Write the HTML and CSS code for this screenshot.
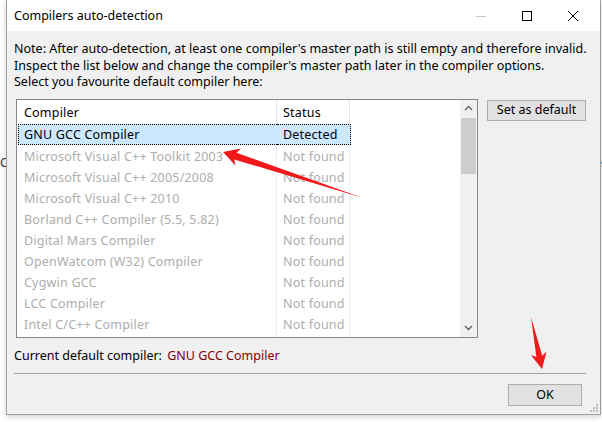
FILE: index.html
```html
<!DOCTYPE html>
<html>
<head>
<meta charset="utf-8">
<link rel="stylesheet" href="styles.css">
</head>
<body>
<div class="frag frag-left">ɛC</div>
<div class="frag frag-right">er</div>
<div class="window">
  <div class="titlebar">
    <span class="title">Compilers auto-detection</span>
    <div class="caption">
      <svg class="cap cap-min" width="12" height="12" viewBox="0 0 12 12"><path d="M1 6.5h10" stroke="#c8c8c8" stroke-width="1"/></svg>
      <svg class="cap cap-max" width="12" height="12" viewBox="0 0 12 12"><rect x="1.5" y="1.5" width="9" height="9" fill="none" stroke="#000" stroke-width="1"/></svg>
      <svg class="cap cap-close" width="12" height="12" viewBox="0 0 12 12"><path d="M1 1l10 10M11 1L1 11" stroke="#000" stroke-width="1"/></svg>
    </div>
  </div>
  <div class="client">
    <p class="note">Note: After auto-detection, at least one compiler's master path is still empty and therefore invalid.<br>Inspect the list below and change the compiler's master path later in the compiler options.<br>Select you favourite default compiler here:</p>
    <div class="mid">
      <div class="listbox">
        <div class="lv">
          <div class="lv-head">
            <div class="c1">Compiler</div>
            <div class="c2">Status</div>
          </div>
          <div class="row sel"><div class="c1">GNU GCC Compiler</div><div class="c2">Detected</div></div>
          <div class="row dim"><div class="c1">Microsoft Visual C++ Toolkit 2003</div><div class="c2">Not found</div></div>
          <div class="row dim"><div class="c1">Microsoft Visual C++ 2005/2008</div><div class="c2">Not found</div></div>
          <div class="row dim"><div class="c1">Microsoft Visual C++ 2010</div><div class="c2">Not found</div></div>
          <div class="row dim"><div class="c1">Borland C++ Compiler (5.5, 5.82)</div><div class="c2">Not found</div></div>
          <div class="row dim"><div class="c1">Digital Mars Compiler</div><div class="c2">Not found</div></div>
          <div class="row dim"><div class="c1">OpenWatcom (W32) Compiler</div><div class="c2">Not found</div></div>
          <div class="row dim"><div class="c1">Cygwin GCC</div><div class="c2">Not found</div></div>
          <div class="row dim"><div class="c1">LCC Compiler</div><div class="c2">Not found</div></div>
          <div class="row dim"><div class="c1">Intel C/C++ Compiler</div><div class="c2">Not found</div></div>
          <div class="row filler"><div class="c1"></div><div class="c2"></div></div>
        </div>
        <div class="vscroll">
          <div class="sb-btn"><svg width="9" height="6" viewBox="0 0 9 6"><path d="M1 5l3.5-3.5L8 5" fill="none" stroke="#606060" stroke-width="1.4"/></svg></div>
          <div class="sb-track"><div class="sb-thumb"></div></div>
          <div class="sb-btn"><svg width="9" height="6" viewBox="0 0 9 6"><path d="M1 1l3.5 3.5L8 1" fill="none" stroke="#606060" stroke-width="1.4"/></svg></div>
        </div>
      </div>
      <div class="side">
        <button class="btn btn-default">Set as default</button>
      </div>
    </div>
    <div class="current">Current default compiler: <span class="value">GNU GCC Compiler</span></div>
    <div class="sep"></div>
    <div class="footer">
      <button class="btn btn-ok">OK</button>
    </div>
    <svg class="grip" width="8" height="8" viewBox="0 0 8 8">
      <rect x="6" y="0" width="2" height="2" fill="#bcbcbc"/>
      <rect x="3" y="3" width="2" height="2" fill="#bcbcbc"/>
      <rect x="6" y="3" width="2" height="2" fill="#bcbcbc"/>
      <rect x="0" y="6" width="2" height="2" fill="#bcbcbc"/>
      <rect x="3" y="6" width="2" height="2" fill="#bcbcbc"/>
      <rect x="6" y="6" width="2" height="2" fill="#bcbcbc"/>
    </svg>
  </div>
</div>
<svg class="annot" width="602" height="422" viewBox="0 0 602 422">
  <polygon points="223,152 241,148.4 236.5,152.8 363,198 234.3,159.4 235.4,165.6" fill="#f01818"/>
  <polygon points="542,369 530.9,355.1 536.4,356.9 531,317 542.2,355.7 546.5,351.7" fill="#f01818"/>
</svg>
</body>
</html>
```

FILE: styles.css
```css
* { box-sizing: border-box; }
html, body { margin: 0; padding: 0; }
body {
  width: 602px;
  height: 422px;
  overflow: hidden;
  background: #ffffff;
  position: relative;
  font-family: "Noto Sans", "Liberation Sans", sans-serif;
  font-size: 12.5px;
  color: #000;
}
.frag {
  position: absolute;
  top: 155px;
  font-size: 12.5px;
  color: #333;
  line-height: 16px;
}
.frag-left { left: -6px; }
.frag-right { left: 595px; }

.window {
  position: relative;
  margin: -1px 0 0 6px;
  width: 595px;
  height: 416px;
  border: 1px solid #9d9d9d;
  background: #f0f0f0;
  box-shadow: 0 2px 6px rgba(0,0,0,0.18);
  display: flex;
  flex-direction: column;
}
.titlebar {
  height: 31px;
  background: #fff;
  display: flex;
  align-items: center;
  padding-left: 7px;
  flex: none;
}
.title { font-size: 12.5px; line-height: 16px; flex: 1; }
.caption { display: flex; align-items: center; height: 100%; }
.cap { display: block; }
.cap-min { margin-right: 34px; }
.cap-max { margin-right: 34px; }
.cap-close { margin-right: 21px; }

.client {
  flex: 1;
  position: relative;
  display: flex;
  flex-direction: column;
}
.note {
  margin: 0;
  padding: 10px 7px 0 7px;
  line-height: 16.5px;
  white-space: nowrap;
}
.mid {
  display: flex;
  align-items: flex-start;
  margin-top: 8px;
  padding-left: 9px;
  padding-right: 14px;
}
.listbox {
  width: 462px;
  height: 239px;
  border: 1px solid #828790;
  background: #fff;
  display: flex;
  overflow: hidden;
  flex: none;
}
.lv { flex: 1; display: flex; flex-direction: column; letter-spacing: 0.2px; }
.lv-head { display: flex; height: 24px; align-items: stretch; }
.lv-head .c1, .lv-head .c2 { border-right: 1px solid #e5e5e5; }
.c1 {
  width: 260px;
  padding-left: 7px;
  display: flex;
  align-items: center;
  white-space: nowrap;
}
.c2 {
  width: 73px;
  padding-left: 6px;
  display: flex;
  align-items: center;
  white-space: nowrap;
}
.lv-head .c1, .lv-head .c2 { padding-top: 2px; }
.row { display: flex; height: 21px; }
.row .c1, .row .c2 { border-right: 1px solid #e8f0f9; padding-top: 2px; }
.row.sel { margin-left: 1px; }
.row.sel .c1, .row.sel .c2 {
  background: #cce8ff;
  border-top: 1px dotted #000;
  border-bottom: 1px dotted #000;
  border-right: none;
  padding-top: 1px;
}
.row.sel .c1 { border-left: 1px dotted #000; width: 259px; padding-left: 5px; }
.row.sel .c2 { width: 74px; border-right: 1px dotted #000; }
.row.dim { color: #adadad; }
.row.filler { flex: 1; }

.vscroll {
  width: 17px;
  background: #f0f0f0;
  display: flex;
  flex-direction: column;
  flex: none;
}
.sb-btn { height: 17px; display: flex; align-items: center; justify-content: center; }
.sb-btn svg { display: block; }
.sb-track { flex: 1; padding: 1px 1px 0 1px; }
.sb-thumb { height: 56px; background: #cdcdcd; }

.side { padding-left: 9px; padding-top: 1px; }
.btn {
  font-family: inherit;
  font-size: 12.5px;
  color: #000;
  background: #e1e1e1;
  border: 1px solid #adadad;
  margin: 0;
  padding: 0;
  line-height: 16px;
}
.btn-default { width: 99px; height: 21px; }
.current {
  margin-top: 10px;
  padding-left: 7px;
  line-height: 16px;
  white-space: nowrap;
}
.value { color: #800000; margin-left: 2px; }
.sep {
  margin: 9px 14px 0 7px;
  height: 1px;
  background: #a0a0a0;
}
.footer {
  display: flex;
  justify-content: flex-end;
  margin-top: 10px;
  padding-right: 18px;
}
.btn-ok { width: 74px; height: 22px; }
.grip { position: absolute; right: 2px; bottom: 2px; }
.annot { position: absolute; left: 0; top: 0; pointer-events: none; }
```
